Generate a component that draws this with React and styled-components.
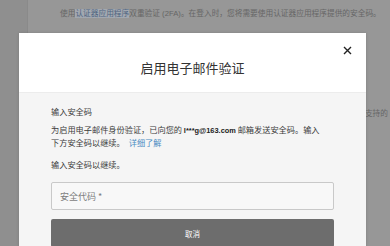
import React from 'react';
import styled, { createGlobalStyle } from 'styled-components';

const GlobalStyle = createGlobalStyle`
  html, body {
    margin: 0;
    padding: 0;
  }
  body {
    font-family: 'Liberation Sans', 'Noto Sans CJK SC', sans-serif;
    background: #979797;
  }
`;

const Page = styled.div`
  position: relative;
  width: 390px;
  height: 246px;
  overflow: hidden;
  display: flex;
  background: #979797;
`;

const Sidebar = styled.div`
  width: 27px;
  flex-shrink: 0;
  background: #8f8f8f;
  border-right: 1px solid #8a8a8a;
`;

const Main = styled.div`
  flex: 1;
  padding: 8px 2px 0 32px;
  display: flex;
  flex-direction: column;
  gap: 89px;
  min-width: 0;
`;

const BgLine = styled.div`
  font-size: 7.7px;
  line-height: 11px;
  color: #666;
  white-space: nowrap;
  text-align: ${(p) => (p.$right ? 'right' : 'left')};
`;

const BgLink = styled.span`
  color: #4f6480;
  background: #a2a8b0;
`;

const Overlay = styled.div`
  position: absolute;
  inset: 0;
  padding: 33px 0 0 19px;
`;

const Modal = styled.div`
  width: 347px;
  display: flex;
  flex-direction: column;
  background: #f5f5f5;
  box-shadow: 0 0 3px rgba(0, 0, 0, 0.15);
`;

const Header = styled.div`
  position: relative;
  height: 59px;
  background: #fff;
  display: flex;
  align-items: center;
  justify-content: center;
  border-bottom: 1px solid #ececec;
`;

const Title = styled.h2`
  margin: 10px 0 0;
  font-size: 13px;
  font-weight: normal;
  color: #333;
  font-family: 'Noto Sans CJK SC', sans-serif;
`;

const Close = styled.button`
  position: absolute;
  top: 10px;
  right: 12px;
  width: 14px;
  height: 14px;
  padding: 0;
  border: 0;
  background: none;
  display: flex;
  align-items: center;
  justify-content: center;
`;

const Body = styled.div`
  padding: 12px 32px 0;
  display: flex;
  flex-direction: column;
  font-family: 'Noto Sans CJK SC', sans-serif;
`;

const Label = styled.div`
  font-size: 8.2px;
  line-height: 13px;
  color: #3c3c3c;
  margin-bottom: ${(p) => p.$gap || 0}px;
`;

const Text = styled.p`
  margin: 0 0 ${(p) => p.$gap || 0}px;
  font-size: 8.2px;
  line-height: 13px;
  color: #3c3c3c;
`;

const Email = styled.b`
  font-family: 'Liberation Sans', sans-serif;
  font-size: 7.4px;
  line-height: 1;
  color: #222;
`;

const Link = styled.a`
  color: #4a8bc2;
  text-decoration: none;
  margin-left: 4px;
`;

const Input = styled.div`
  height: 28px;
  box-sizing: border-box;
  border: 1px solid #c9c9c9;
  border-radius: 2px;
  background: #f8f8f8;
  display: flex;
  align-items: center;
  padding-left: 8px;
  font-size: 9px;
  color: #7d7d7d;
  margin-bottom: 9px;
`;

const Button = styled.button`
  height: 28px;
  border: 0;
  border-radius: 2px;
  background: #6d6d6d;
  color: #fff;
  font-size: 7.5px;
  font-family: 'Noto Sans CJK SC', sans-serif;
  padding: 0;
`;

export default function App() {
  return (
    <>
      <GlobalStyle />
      <Page>
        <Sidebar />
        <Main>
          <BgLine>
            使用<BgLink>认证器应用程序</BgLink>双重验证 (2FA)。在登入时，您将需要使用认证器应用程序提供的安全码。
          </BgLine>
          <BgLine $right>电子邮件验证可作为不支持的</BgLine>
        </Main>
        <Overlay>
          <Modal>
            <Header>
              <Title>启用电子邮件验证</Title>
              <Close aria-label="关闭">
                <svg width="9" height="9" viewBox="0 0 9 9">
                  <path d="M1 1L8 8M8 1L1 8" stroke="#222" strokeWidth="1.4" fill="none" />
                </svg>
              </Close>
            </Header>
            <Body>
              <Label $gap={5}>输入安全码</Label>
              <Text $gap={9}>
                为启用电子邮件身份验证，已向您的 <Email>l***g@163.com</Email> 邮箱发送安全码。输入
                <br />
                下方安全码以继续。
                <Link href="#">详细了解</Link>
              </Text>
              <Label $gap={11}>输入安全码以继续。</Label>
              <Input>安全代码 *</Input>
              <Button>取消</Button>
            </Body>
          </Modal>
        </Overlay>
      </Page>
    </>
  );
}
